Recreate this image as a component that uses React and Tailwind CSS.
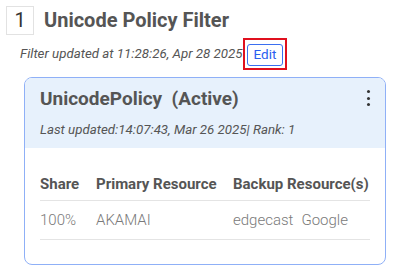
import React from 'react';

const rows = [{ share: '100%', primary: 'AKAMAI', backup: ['edgecast', 'Google'] }];

const App = () => {
  return (
    <div className="w-[409px] h-[269px] bg-white font-['Roboto',sans-serif] text-[#555] overflow-hidden">
      {/* Heading */}
      <div className="flex items-center pt-[5px] pl-[6px]">
        <div className="w-[28px] h-[29px] border border-[#e2e2e2] flex items-center justify-center text-[20px] text-[#333]">1</div>
        <h1 className="ml-[10px] text-[20px] font-bold text-[#555]">Unicode Policy Filter</h1>
      </div>

      <div className="flex items-center pl-[20px] mt-[3px]">
        <span className="italic text-[13.3px] text-[#555]">Filter updated at 11:28:26, Apr 28 2025</span>
        <div className="border-2 border-[#e0101e] p-[2px]">
          <button className="h-[22px] px-[6px] border border-[#3b6ff0] rounded-[3px] text-[13.5px] text-[#2a5ef0] leading-none bg-white">Edit</button>
        </div>
      </div>

      {/* Card */}
      <div className="ml-[24px] mt-[7px] w-[362px] h-[188px] border-[1.5px] border-[#8fb0f7] rounded-[8px] overflow-hidden">
        <div className="bg-[#e7f1fc] h-[70px] pl-[15px] pr-[12px] pt-[9px] relative">
          <div className="text-[19px] font-bold text-[#555] leading-[24px]">UnicodePolicy&nbsp;&nbsp;(Active)</div>
          <div className="italic text-[13.3px] text-[#555] mt-[9px]">Last updated:14:07:43, Mar 26 2025| Rank: 1</div>
          <div className="absolute right-[15px] top-[12px] flex flex-col gap-[3.5px]">
            <span className="w-[3px] h-[3px] rounded-full bg-[#333]" />
            <span className="w-[3px] h-[3px] rounded-full bg-[#333]" />
            <span className="w-[3px] h-[3px] rounded-full bg-[#333]" />
          </div>
        </div>

        <div className="px-[15px] pt-[21px]">
          <div className="grid grid-cols-[56px_137px_1fr] h-[32px] items-center border-b border-[#e4e4e4] text-[15px] font-bold text-[#555]">
            <span>Share</span>
            <span>Primary Resource</span>
            <span>Backup Resource(s)</span>
          </div>
          {rows.map((r) => (
            <div key={r.primary} className="grid grid-cols-[56px_137px_1fr] h-[39px] items-center border-b border-[#e4e4e4] text-[15px] font-light text-[#7a7a7a]">
              <span>{r.share}</span>
              <span>{r.primary}</span>
              <span className="flex gap-[8px]">
                {r.backup.map((b) => (
                  <span key={b}>{b}</span>
                ))}
              </span>
            </div>
          ))}
        </div>
      </div>
    </div>
  );
};

export default App;
